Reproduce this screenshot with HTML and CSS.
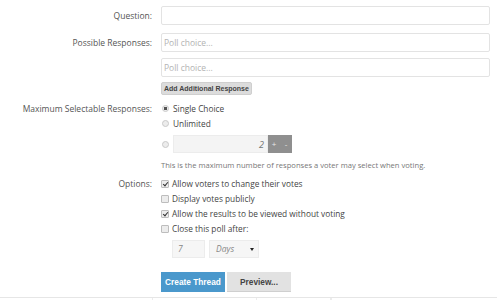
FILE: index.html
```html
<!DOCTYPE html>
<html lang="en">
<head>
    <meta charset="utf-8">
    <title>Create Poll</title>
    <link rel="stylesheet" href="styles.css">
</head>
<body>
    <form class="pollForm">
        <div class="rad">
            <label class="etiket">Question:</label>
            <div class="felt">
                <input class="tekstfelt" type="text">
            </div>
        </div>

        <div class="rad svar">
            <label class="etiket">Possible Responses:</label>
            <div class="felt">
                <input class="tekstfelt" type="text" placeholder="Poll choice...">
                <input class="tekstfelt" type="text" placeholder="Poll choice...">
                <button type="button" class="lilleKnap">Add Additional Response</button>
            </div>
        </div>

        <div class="rad maks">
            <label class="etiket">Maximum Selectable Responses:</label>
            <div class="felt">
                <label class="valg"><span class="radio valgt"></span>Single Choice</label>
                <label class="valg"><span class="radio"></span>Unlimited</label>
                <div class="spinRad">
                    <span class="radio"></span>
                    <div class="spinner">
                        <span class="tal">2</span>
                        <span class="spinKnap">+</span>
                        <span class="spinKnap">-</span>
                    </div>
                </div>
                <p class="hjaelp">This is the maximum number of responses a voter may select when voting.</p>
            </div>
        </div>

        <div class="rad muligheder">
            <label class="etiket">Options:</label>
            <div class="felt">
                <label class="valg"><span class="check valgt"></span>Allow voters to change their votes</label>
                <label class="valg"><span class="check"></span>Display votes publicly</label>
                <label class="valg"><span class="check valgt"></span>Allow the results to be viewed without voting</label>
                <label class="valg"><span class="check"></span>Close this poll after:</label>
                <div class="lukRad">
                    <span class="dage">7</span>
                    <span class="enhed">Days <i class="pil"></i></span>
                </div>
            </div>
        </div>

        <div class="rad knapper">
            <span></span>
            <div class="knapRad">
                <button type="button" class="blaaKnap">Create Thread</button>
                <button type="button" class="graaKnap">Preview...</button>
            </div>
        </div>

        <div class="bundlinje">
            <span class="del1"></span>
            <span class="del2"></span>
            <span class="del3"></span>
            <span class="del4"></span>
        </div>
    </form>
</body>
</html>
```

FILE: styles.css
```css
body {
    margin: 0;
    background-color: white;
    font-family: 'Open Sans', sans-serif;
    color: #4a4a4a;
}

.pollForm {
    padding-top: 6px;
}

.rad {
    display: grid;
    grid-template-columns: 152px 1fr;
    column-gap: 9px;
    margin-bottom: 7px;
}

.etiket {
    text-align: right;
    font-size: 8.5px;
    line-height: 19px;
    color: #555;
}

.felt {
    display: flex;
    flex-direction: column;
    align-items: flex-start;
    padding-right: 7px;
}

.tekstfelt {
    box-sizing: border-box;
    width: 100%;
    height: 19px;
    margin: 0 0 6px 0;
    padding: 0 2px;
    border: 1px solid #e3e3e3;
    border-radius: 2px;
    font-family: 'Open Sans', sans-serif;
    font-size: 8.5px;
    outline: none;
}

.tekstfelt::placeholder {
    color: #b3b3b3;
}

.rad:first-child {
    margin-bottom: 8px;
}

.rad:first-child .tekstfelt {
    margin-bottom: 0;
}

.svar {
    margin-bottom: 6px;
}

.tekstfelt + .lilleKnap {
    margin-top: -1px;
}

.lilleKnap {
    height: 13px;
    padding: 0 2px;
    border: 1px solid #cfcfcf;
    border-radius: 2px;
    background-color: #dcdcdc;
    font-family: 'Liberation Sans', sans-serif;
    font-weight: bold;
    font-size: 7px;
    color: #444;
}

.maks {
    margin-bottom: 6px;
}

.maks .etiket, .muligheder .etiket {
    line-height: 15px;
}

.valg {
    display: flex;
    align-items: center;
    height: 15px;
    font-size: 8.3px;
    color: #444;
}

.radio {
    box-sizing: border-box;
    width: 7px;
    height: 7px;
    margin: 0 4px 0 1px;
    border: 1px solid #c9c9c9;
    border-radius: 50%;
    background-color: #ececec;
}

.radio.valgt {
    background: radial-gradient(circle, #555 0 1.5px, #eee 2px);
}

.check {
    box-sizing: border-box;
    width: 8px;
    height: 8px;
    margin-right: 3px;
    border: 1px solid #bdbdbd;
    border-radius: 1px;
    background-color: #ececec;
    position: relative;
}

.check.valgt::after {
    content: "";
    position: absolute;
    left: 2px;
    top: 0;
    width: 2px;
    height: 4px;
    border: solid #333;
    border-width: 0 1.5px 1.5px 0;
    transform: rotate(40deg);
}

.spinRad {
    display: flex;
    align-items: center;
    margin-top: 4px;
}

.spinner {
    display: flex;
    height: 18px;
}

.tal {
    box-sizing: border-box;
    width: 95px;
    height: 18px;
    padding-right: 3px;
    border: 1px solid #ececec;
    background-color: #f4f4f4;
    text-align: right;
    font-style: italic;
    font-size: 9px;
    line-height: 17px;
    color: #777;
}

.spinKnap {
    width: 12px;
    height: 18px;
    background-color: #8f8f8f;
    color: #e8e8e8;
    text-align: center;
    font-size: 8px;
    line-height: 18px;
}

.hjaelp {
    margin: 8px 0 0 0;
    font-size: 7.6px;
    line-height: 9px;
    color: #777;
}

.lukRad {
    display: flex;
    gap: 4px;
    margin: 4px 0 0 11px;
}

.dage, .enhed {
    box-sizing: border-box;
    height: 18px;
    border: 1px solid #ececec;
    background-color: #f6f6f6;
    font-style: italic;
    font-size: 8.5px;
    line-height: 16px;
    color: #888;
}

.dage {
    width: 33px;
    padding-left: 5px;
}

.enhed {
    width: 50px;
    padding: 0 4px 0 6px;
    display: flex;
    align-items: center;
    justify-content: space-between;
}

.pil {
    width: 0;
    height: 0;
    border-left: 2px solid transparent;
    border-right: 2px solid transparent;
    border-top: 3px solid #222;
}

.knapper {
    margin-top: 14px;
    margin-bottom: 5px;
}

.knapRad {
    display: flex;
    gap: 2px;
}

.blaaKnap, .graaKnap {
    height: 20px;
    padding: 0;
    border: none;
    white-space: nowrap;
    font-family: 'Liberation Sans', sans-serif;
    font-weight: bold;
    font-size: 8.3px;
}

.blaaKnap {
    width: 64px;
    background-color: #4a98cc;
    color: white;
}

.graaKnap {
    width: 64px;
    background-color: #e2e2e2;
    color: #444;
    border-bottom: 1px solid #cfcfcf;
}

.bundlinje {
    display: flex;
    height: 3px;
    border-top: 1px solid #e6e6e6;
}

.bundlinje span {
    border-right: 1px solid #ececec;
}

.del1 { width: 152px; }
.del2 { width: 103px; }
.del3 { width: 73px; }
```
